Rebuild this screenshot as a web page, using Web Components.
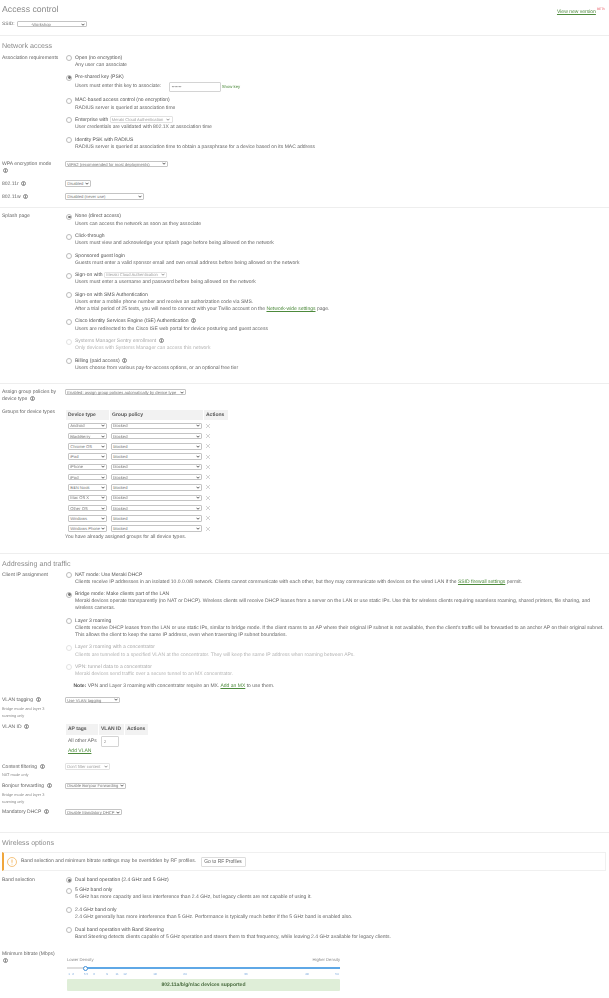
<!DOCTYPE html>
<html lang="en"><head><meta charset="utf-8"><title>Access control</title>
<style>
html,body{margin:0;padding:0;background:#fff}
body{font:5.02px/7.1px "Liberation Sans",Arial,sans-serif;color:#666;text-rendering:geometricPrecision;width:609px;overflow-x:hidden}
a{color:#4d8a3c;text-decoration:underline}
</style></head><body>
<ac-page>
  <ac-header slot="header"></ac-header>

  <ac-section heading="Network access" gap="4" end="6.45">
    <ac-row label="Association requirements">
      <ac-opt title-text="Open (no encryption)">Any user can associate</ac-opt>
      <ac-opt on><span slot="t">Pre-shared key (PSK)</span><span style="display:flex;align-items:center;height:10.85px">Users must enter this key to associate:<ac-input w="52" h="10" value="•••••••" style="margin:0 1px 0 7.5px"></ac-input><a style="font-size:4.3px;text-decoration:none">Show key</a></span></ac-opt>
      <ac-opt title-text="MAC-based access control (no encryption)">RADIUS server is queried at association time</ac-opt>
      <ac-opt><span slot="t">Enterprise with <ac-select w="63" text="Meraki Cloud Authentication" dim></ac-select></span>User credentials are validated with 802.1X at association time</ac-opt>
      <ac-opt title-text="Identity PSK with RADIUS">RADIUS server is queried at association time to obtain a passphrase for a device based on its MAC address</ac-opt>
    </ac-row>
    <ac-row label="WPA encryption mode" info-break mt="5.2"><ac-select w="103" text="WPA2 (recommended for most deployments)"></ac-select></ac-row>
    <ac-row label="802.11r" info mt="5.1"><ac-select w="26" text="Disabled"></ac-select></ac-row>
    <ac-row label="802.11w" info mt="5.6"><ac-select w="79" text="Disabled (never use)"></ac-select></ac-row>
  </ac-section>

  <ac-section gap="5" end="6.1">
    <ac-row label="Splash page">
      <ac-opt on title-text="None (direct access)">Users can access the network as soon as they associate</ac-opt>
      <ac-opt title-text="Click-through">Users must view and acknowledge your splash page before being allowed on the network</ac-opt>
      <ac-opt title-text="Sponsored guest login">Guests must enter a valid sponsor email and own email address before being allowed on the network</ac-opt>
      <ac-opt><span slot="t">Sign-on with <ac-select w="63" text="Meraki Cloud Authentication" dim></ac-select></span>Users must enter a username and password before being allowed on the network</ac-opt>
      <ac-opt title-text="Sign-on with SMS Authentication">Users enter a mobile phone number and receive an authorization code via SMS.<br>After a trial period of 25 texts, you will need to connect with your Twilio account on the <a>Network-wide settings</a> page.</ac-opt>
      <ac-opt><span slot="t">Cisco Identity Services Engine (ISE) Authentication &nbsp;<ac-info></ac-info></span>Users are redirected to the Cisco ISE web portal for device posturing and guest access</ac-opt>
      <ac-opt dis><span slot="t">Systems Manager Sentry enrollment &nbsp;<ac-info></ac-info></span>Only devices with Systems Manager can access this network</ac-opt>
      <ac-opt><span slot="t">Billing (paid access) &nbsp;<ac-info></ac-info></span>Users choose from various pay-for-access options, or an optional free tier</ac-opt>
    </ac-row>
  </ac-section>

  <ac-section gap="5.15" end="12.4">
    <ac-row label="Assign group policies by device type" info><ac-select w="121" text="Enabled: assign group policies automatically by device type"></ac-select></ac-row>
    <ac-row label="Groups for device types" mt="5.1">
      <ac-device-table></ac-device-table>
      <div>You have already assigned groups for all device types.</div>
    </ac-row>
  </ac-section>

  <ac-section heading="Addressing and traffic" gap="3" end="15.45">
    <ac-row label="Client IP assignment">
      <ac-opt mb="5.3" title-text="NAT mode: Use Meraki DHCP">Clients receive IP addresses in an isolated 10.0.0.0/8 network. Clients cannot communicate with each other, but they may communicate with devices on the wired LAN if the <a>SSID firewall settings</a> permit.</ac-opt>
      <ac-opt mb="5.3" on title-text="Bridge mode: Make clients part of the LAN">Meraki devices operate transparently (no NAT or DHCP). Wireless clients will receive DHCP leases from a server on the LAN or use static IPs. Use this for wireless clients requiring seamless roaming, shared printers, file sharing, and<br>wireless cameras.</ac-opt>
      <ac-opt mb="5.3" title-text="Layer 3 roaming">Clients receive DHCP leases from the LAN or use static IPs, similar to bridge mode. If the client roams to an AP where their original IP subnet is not available, then the client's traffic will be forwarded to an anchor AP on their original subnet.<br>This allows the client to keep the same IP address, even when traversing IP subnet boundaries.</ac-opt>
      <ac-opt mb="5.3" dis title-text="Layer 3 roaming with a concentrator">Clients are tunneled to a specified VLAN at the concentrator. They will keep the same IP address when roaming between APs.</ac-opt>
      <ac-opt mb="5.3" dis title-text="VPN: tunnel data to a concentrator">Meraki devices send traffic over a secure tunnel to an MX concentrator.</ac-opt>
      <div style="padding-left:8.5px;margin-top:-.7px"><b style="font-weight:700;color:#555">Note:</b> VPN and Layer 3 roaming with concentrator require an MX. <a>Add an MX</a> to use them.</div>
    </ac-row>
    <ac-row label="VLAN tagging" info note="Bridge mode and layer 3 roaming only" mt="7.5"><ac-select w="55" text="Use VLAN tagging"></ac-select></ac-row>
    <ac-row label="VLAN ID" info mt="4.35"><ac-vlan-table></ac-vlan-table></ac-row>
    <ac-row label="Content filtering" info note="NAT mode only" mt="8.2"><ac-select w="45" text="Don't filter content" dim></ac-select></ac-row>
    <ac-row label="Bonjour forwarding" info note="Bridge mode and layer 3 roaming only" mt="4.9"><ac-select w="61" text="Disable Bonjour Forwarding"></ac-select></ac-row>
    <ac-row label="Mandatory DHCP" info mt="4.3"><ac-select w="57" text="Disable Mandatory DHCP"></ac-select></ac-row>
  </ac-section>

  <ac-section heading="Wireless options" gap="4.5" end="0">
    <ac-banner></ac-banner>
    <ac-row label="Band selection" mt="5.85">
      <ac-opt on mb="3.3" title-text="Dual band operation (2.4 GHz and 5 GHz)"></ac-opt>
      <ac-opt title-text="5 GHz band only">5 GHz has more capacity and less interference than 2.4 GHz, but legacy clients are not capable of using it.</ac-opt>
      <ac-opt title-text="2.4 GHz band only">2.4 GHz generally has more interference than 5 GHz. Performance is typically much better if the 5 GHz band is enabled also.</ac-opt>
      <ac-opt title-text="Dual band operation with Band Steering">Band Steering detects clients capable of 5 GHz operation and steers them to that frequency, while leaving 2.4 GHz available for legacy clients.</ac-opt>
    </ac-row>
    <ac-row label="Minimum bitrate (Mbps)" info-break mt="5.1"><ac-slider></ac-slider></ac-row>
  </ac-section>
</ac-page>

<script>
const def=(n,c)=>customElements.define(n,c);
const INFO='<svg viewBox="0 0 10 10" width="5" height="5" style="vertical-align:-.8px"><circle cx="5" cy="5" r="4" fill="none" stroke="#666" stroke-width="1.5"/><rect x="4.2" y="4.3" width="1.6" height="3.3" fill="#555"/><rect x="4.2" y="2.3" width="1.6" height="1.4" fill="#555"/></svg>';

class AcInfo extends HTMLElement{constructor(){super();this.attachShadow({mode:'open'}).innerHTML=`<style>:host{display:inline-block;width:5px;height:5px;line-height:5px;margin:-1px 0}svg{display:block}</style>${INFO}`}}
def('ac-info',AcInfo);

class AcPage extends HTMLElement{constructor(){super();this.attachShadow({mode:'open'}).innerHTML=`<style>:host{display:block;width:609px;padding-bottom:6px;filter:blur(.35px)}</style><slot name="header"></slot><slot></slot>`}}
def('ac-page',AcPage);

class AcHeader extends HTMLElement{constructor(){super();this.attachShadow({mode:'open'}).innerHTML=`<style>
:host{display:block;height:35px;box-sizing:border-box;padding:4px 4px 0 2px}
.top{display:flex;justify-content:space-between;align-items:flex-start}
h1{margin:0;font:400 8.7px/10px "Liberation Sans",Arial,sans-serif;color:#8a8a8a}
.v{margin-top:4.5px;line-height:7px;white-space:nowrap}
.v a{color:#4d8a3c;text-decoration:underline}
sup{color:#e8606a;font-size:3.2px;line-height:0;vertical-align:2.2px;margin-left:1px}
.s{display:flex;align-items:center;gap:2.7px;margin-top:5px;font-size:4.8px}
</style><div class="top"><h1>Access control</h1><div class="v"><a>View new version</a><sup>BETA</sup></div></div>
<div class="s"><span>SSID:</span><ac-select w="70" text="          -Workshop"></ac-select></div>`}}
def('ac-header',AcHeader);

class AcSection extends HTMLElement{constructor(){super();const h=this.getAttribute('heading'),g=this.getAttribute('gap')||5,t=this.getAttribute('end')||0;
this.attachShadow({mode:'open'}).innerHTML=`<style>
:host{display:block;border-top:1px solid #eee}
h2{margin:0;font:400 7.1px/9px "Liberation Sans",Arial,sans-serif;color:#8a8a8a;padding:5.5px 0 0 2px}
.b{display:block;padding-top:${g}px;padding-bottom:${t}px}
</style>${h?`<h2>${h}</h2>`:''}<div class="b"><slot></slot></div>`}}
def('ac-section',AcSection);

class AcRow extends HTMLElement{constructor(){super();const l=this.getAttribute('label'),n=this.getAttribute('note'),mt=this.getAttribute('mt')||0;
const i=this.hasAttribute('info')?` &nbsp;${INFO}`:this.hasAttribute('info-break')?`<br>&nbsp;${INFO}`:'';
this.attachShadow({mode:'open'}).innerHTML=`<style>
:host{display:grid;grid-template-columns:63px 1fr;margin-top:${mt}px;padding-left:2px;box-sizing:border-box}
.l{width:60px}
.n{font-size:3.9px;line-height:7.3px;color:#888;width:46px}
.c{min-width:0}
</style><div class="l">${l}${i}${n?`<div class="n">${n}</div>`:''}</div><div class="c"><slot></slot></div>`}}
def('ac-row',AcRow);

class AcOpt extends HTMLElement{constructor(){super();const tt=this.getAttribute('title-text')||'',on=this.hasAttribute('on'),dis=this.hasAttribute('dis'),mb=this.getAttribute('mb')||5.4;
this.attachShadow({mode:'open'}).innerHTML=`<style>
:host{display:grid;grid-template-columns:10px 1fr;margin-bottom:${mb}px;${dis?'color:#b4b4b4':''}}
.r{width:4px;height:4px;border-radius:50%;border:.6px solid ${dis?'#e2e2e2':'#bbb'};margin:.5px 0 0 1.2px;background:#fff;display:flex;align-items:center;justify-content:center}
.d{width:2.8px;height:2.8px;border-radius:50%;background:#777}
.t{display:block;color:${dis?'#aaa':'#555'}}
.s{display:block;white-space:nowrap}
</style><div class="r">${on?'<div class="d"></div>':''}</div><div><div class="t">${tt}<slot name="t"></slot></div><div class="s"><slot></slot></div></div>`}}
def('ac-opt',AcOpt);

class AcSelect extends HTMLElement{constructor(){super();const w=this.getAttribute('w'),t=this.getAttribute('text'),dim=this.hasAttribute('dim');
this.attachShadow({mode:'open'}).innerHTML=`<style>
:host{display:inline-block;vertical-align:middle;margin:-2px 0}
.b{width:${w}px;height:6.4px;box-sizing:border-box;border:.6px solid ${dim?'#e2e2e2':'#c4c4c4'};border-radius:1px;display:flex;align-items:center;justify-content:space-between;padding:0 1.2px;font-size:4.15px;line-height:5px;color:${dim?'#a0a0a0':'#777'};background:#fff}
span{white-space:pre}
svg{flex:none}
</style><div class="b"><span>${t}</span><svg width="4" height="3" viewBox="0 0 8 6"><path d="M1 1.5 4 4.5 7 1.5" fill="none" stroke="${dim?'#777':'#333'}" stroke-width="1.6"/></svg></div>`}}
def('ac-select',AcSelect);

class AcInput extends HTMLElement{constructor(){super();const w=this.getAttribute('w'),h=this.getAttribute('h'),v=this.getAttribute('value');
this.attachShadow({mode:'open'}).innerHTML=`<style>
:host{display:inline-block;flex:none}
.b{width:${w}px;height:${h}px;box-sizing:border-box;border:.6px solid #d4d4d4;border-radius:1px;padding:0 2px;display:flex;align-items:center;font-size:4px;color:#888;background:#fff}
</style><div class="b">${v}</div>`}}
def('ac-input',AcInput);

class AcDeviceTable extends HTMLElement{constructor(){super();
const d=['Android','BlackBerry','Chrome OS','iPad','iPhone','iPod','B&amp;N Nook','Mac OS X','Other OS','Windows','Windows Phone'];
const rows=d.map(x=>`<div class="r"><ac-select w="39" text="${x}"></ac-select><ac-select w="91" text="blocked"></ac-select><svg width="6" height="6" viewBox="0 0 12 12"><path d="M2 2 10 10M10 2 2 10" stroke="#bbb" stroke-width="1.3" fill="none"/></svg></div>`).join('');
this.attachShadow({mode:'open'}).innerHTML=`<style>
:host{display:block;margin-top:.85px}
.h{display:grid;grid-template-columns:43px 93px 24px;gap:1px;width:162px;margin-left:1px}
.h div{background:#f2f2f2;font-weight:700;color:#555;height:10.6px;line-height:10.6px;padding-left:2px;box-sizing:border-box}
.r{display:flex;align-items:center;height:10.3px;padding-left:3px}
.r ac-select:nth-child(2){margin-left:4px}
.r svg{margin-left:3px}
.w{padding-top:.25px}
</style><div class="h"><div>Device type</div><div>Group policy</div><div>Actions</div></div><div class="w">${rows}</div>`}}
def('ac-device-table',AcDeviceTable);

class AcVlanTable extends HTMLElement{constructor(){super();
this.attachShadow({mode:'open'}).innerHTML=`<style>
:host{display:block;margin-top:.85px}
.g{display:grid;grid-template-columns:32px 25px 23px;gap:0 1px;margin-left:1px;width:82px}
.h{background:#f2f2f2;font-weight:700;color:#555;height:10.6px;line-height:10.6px;padding-left:2px;box-sizing:border-box}
.c{height:12.7px;display:flex;align-items:center;padding-left:2px;box-sizing:border-box}
a{display:block;color:#4d8a3c;text-decoration:underline;padding:.75px 0 0 3px}
</style><div class="g"><div class="h">AP tags</div><div class="h">VLAN ID</div><div class="h">Actions</div>
<div class="c">All other APs</div><div class="c"><ac-input w="18" h="10.6" value="2"></ac-input></div><div class="c"></div></div><a>Add VLAN</a>`}}
def('ac-vlan-table',AcVlanTable);

class AcBanner extends HTMLElement{constructor(){super();
this.attachShadow({mode:'open'}).innerHTML=`<style>
:host{display:flex;align-items:center;gap:4px;margin:0 3px 0 2px;height:19px;box-sizing:border-box;border:.6px solid #f0f0f0;border-left:2px solid #f0a63c;padding-left:3px;background:#fff}
button{font:4.9px "Liberation Sans",Arial,sans-serif;color:#666;height:10px;width:45px;padding:0;background:#fff;border:.6px solid #ddd;border-radius:1px;margin-left:.5px}
svg{flex:none}
</style><svg width="10" height="10" viewBox="0 0 20 20"><circle cx="10" cy="10" r="9" fill="none" stroke="#f0a63c" stroke-width="1.3"/><path d="M10 5V11.5M10 13.5V15" stroke="#f0a63c" stroke-width="1.5" fill="none"/></svg><span>Band selection and minimum bitrate settings may be overridden by RF profiles.</span><button>Go to RF Profiles</button>`}}
def('ac-banner',AcBanner);

class AcSlider extends HTMLElement{constructor(){super();
const t=[['1',2],['2',6],['5.5',19],['6',27],['9',40],['11',50],['12',58],['18',88],['24',118],['36',179],['48',240],['54',270]];
this.attachShadow({mode:'open'}).innerHTML=`<style>
:host{display:block;width:273px;margin-left:2px;padding-top:4.75px}
.l{display:flex;justify-content:space-between;font-size:4.2px;line-height:7px;color:#888}
.tr{position:relative;height:2px;margin-top:4.5px;background:linear-gradient(90deg,#ddd 18px,#5fa8e6 18px)}
.th{position:absolute;left:15.5px;top:-1.4px;width:3.2px;height:3.2px;border-radius:50%;background:#fff;border:.8px solid #3f8fd6}
.tk{position:relative;height:6px;margin-top:2px;font-size:3px;line-height:6px;color:#7aa9dd}
.tk span{position:absolute;transform:translateX(-50%)}
.g{height:12px;margin-top:2px;background:#dfeed8;border-radius:1px;text-align:center;font-weight:700;line-height:12px;color:#46693c}
</style><div class="l"><span>Lower Density</span><span>Higher Density</span></div><div class="tr"><div class="th"></div></div>
<div class="tk">${t.map(([a,x])=>`<span style="left:${x}px">${a}</span>`).join('')}</div><div class="g">802.11a/b/g/n/ac devices supported</div>`}}
def('ac-slider',AcSlider);
</script>
</body></html>
